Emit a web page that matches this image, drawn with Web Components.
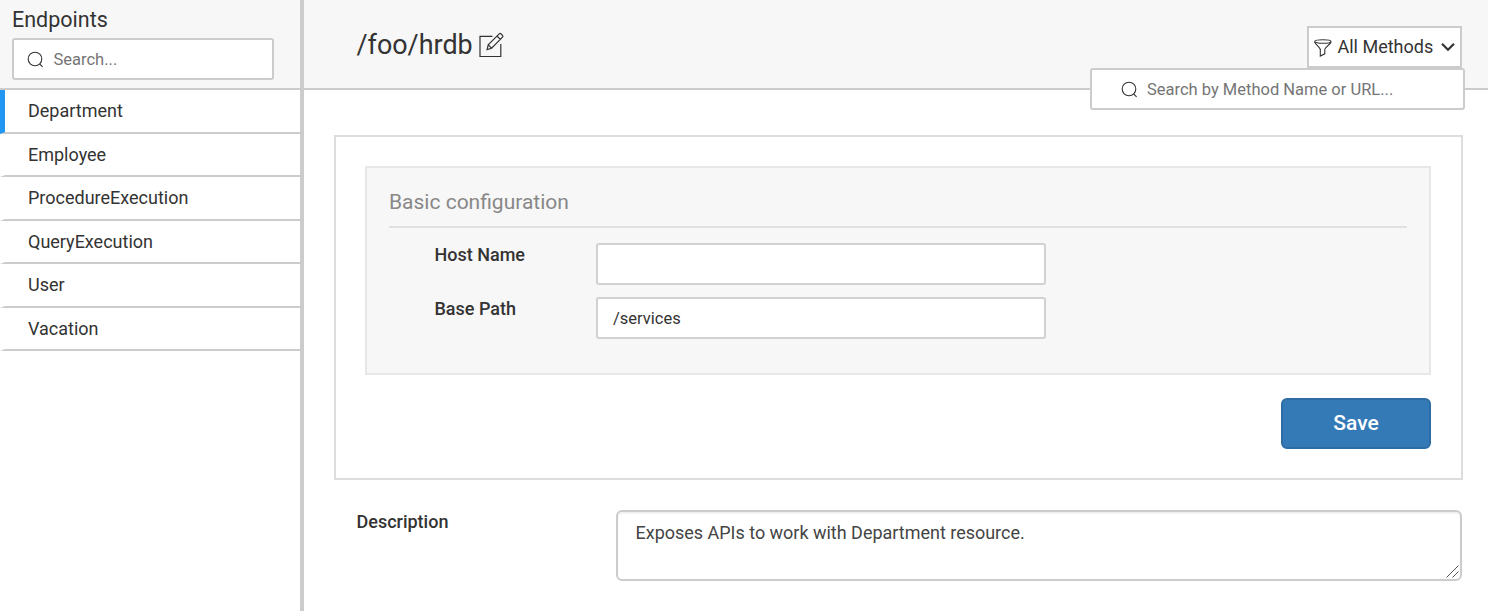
<!DOCTYPE html>
<html lang="en"><head><meta charset="utf-8"><title>Endpoints</title>
<style>
html,body{margin:0;height:100%;overflow:hidden}
body{font-family:Roboto,sans-serif;color:#333;background:#fff}
</style></head><body>
<api-page></api-page>
<script>
const define=(name,html)=>customElements.define(name,class extends HTMLElement{
  constructor(){super();const t=document.createElement('template');
    t.innerHTML='<style>*{box-sizing:border-box}:host{box-sizing:border-box}</style>'+html;
    this.attachShadow({mode:'open'}).append(t.content.cloneNode(true));}
});

define('search-box',`<style>
:host{display:flex;align-items:center;height:42px;background:#fff;border:2px solid #ccc;border-radius:3px;color:#757575;font-size:16.5px;line-height:20px;padding-left:var(--inset,13px);white-space:nowrap}
svg{flex:none;width:18px;height:18px;margin-right:8.5px;margin-top:2px}
span{padding-top:2px}
</style><svg viewBox="0 0 18 18" fill="none" stroke="#333" stroke-width="1.1"><circle cx="8" cy="8" r="6.8"/><path d="M12.6 12.8 15.6 15.8"/></svg><span><slot></slot></span>`);

define('endpoint-item',`<style>
:host{display:block;height:43.5px;border-left:5px solid transparent;border-bottom:2px solid #ccc;padding:10px 0 0 23px;font-size:18px;line-height:22px}
:host([active]){border-left-color:#2196f3}
</style><slot></slot>`);

define('endpoint-sidebar',`<style>
:host{display:flex;flex-direction:column;flex:none;width:304px;border-right:4px solid #ccc}
header{height:90px;background:#f7f7f7;border-bottom:2px solid #ccc;padding:7px 26px 0 12px}
h1{margin:0 0 5px;font-weight:400;font-size:21.5px;line-height:26px}
</style><header><h1>Endpoints</h1><search-box>Search...</search-box></header>
<nav><endpoint-item active>Department</endpoint-item><endpoint-item>Employee</endpoint-item><endpoint-item>ProcedureExecution</endpoint-item><endpoint-item>QueryExecution</endpoint-item><endpoint-item>User</endpoint-item><endpoint-item>Vacation</endpoint-item></nav>`);

define('method-filter',`<style>
:host{display:flex;align-items:center;width:155px;height:42px;border:2px solid #ccc;background:#fff;font-size:18px;line-height:22px;padding-left:4px;white-space:nowrap}
.f{width:19px;height:20px;margin-right:5.5px;margin-top:2px;flex:none}
.c{width:14px;height:10px;margin-left:7.5px;flex:none}
</style><svg class="f" viewBox="0 0 19 20" fill="none" stroke="#333" stroke-width="1.1"><ellipse cx="9.8" cy="3.5" rx="8.2" ry="1.8"/><path d="M1.6 4C2 6 7.3 10 7.3 11.5V18.1L11.8 15.8V11.5C11.8 10 17.5 6 18 4"/></svg><slot></slot><svg class="c" viewBox="0 0 14 10" fill="none" stroke="#333" stroke-width="2.2"><path d="M1 1.8 7 7.8 13 1.8"/></svg>`);

define('service-header',`<style>
:host{display:flex;justify-content:space-between;height:90px;background:#f7f7f7;border-bottom:2px solid #ccc;padding:26px 23px 0 52.5px}
h2{display:flex;margin:4px 0 0;height:30px;font-weight:400;font-size:26.9px;line-height:30px}
h2 svg{width:25px;height:26px;margin:2px 0 0 6.6px}
.tools{display:flex;flex-direction:column;align-items:flex-end;width:375px}
method-filter{flex:none;margin-right:3px}
search-box{--inset:28.5px;flex:none;width:375px;position:relative}
</style><h2>/foo/hrdb<svg viewBox="0 0 25 26" fill="none" stroke="#333" stroke-width="1.2"><path d="M13.5 4.3H1V24.5H21.8V12"/><path d="M8.1 17.6 9.2 12.8 20.2 1.8Q21 1 21.9 1.8L23.5 3.4Q24.3 4.3 23.5 5.1L12.6 16.2ZM9.2 12.8 12.6 16.2M18 4 21.3 7.3"/></svg></h2>
<div class="tools"><method-filter>All Methods</method-filter><search-box>Search by Method Name or URL...</search-box></div>`);

define('form-row',`<style>
:host{display:flex;height:42px;margin-bottom:12px;padding-left:45.5px}
label{width:161.5px;font-weight:500;font-size:18px;line-height:22px;padding-top:1px}
div{width:450px;height:42px;border:2px solid #d1d1d1;border-radius:3px;background:#fff;font-size:16.5px;line-height:37px;padding:1px 0 0 15px}
</style><label><slot name="label"></slot></label><div><slot></slot></div>`);

define('config-card',`<style>
:host{display:flex;flex-direction:column;align-items:flex-end;height:345px;margin:45px 25px 0 30px;padding:29px 30px 0 29px;border:2px solid #ddd}
section{align-self:stretch;height:209px;background:#f7f7f7;border:2px solid #e7e7e7;padding:21px 22px 0}
h3{margin:0 0 15px;height:39px;border-bottom:2px solid #e1e1e1;font-weight:400;font-size:21px;line-height:26px;color:#888}
button{width:150px;height:51px;margin-top:23px;background:#337ab7;border:2px solid #2e6da4;border-radius:6px;color:#fff;font:500 21px/26px Roboto,sans-serif;padding:0 0 2px}
</style><section><h3>Basic configuration</h3><form-row><span slot="label">Host Name</span></form-row><form-row><span slot="label">Base Path</span>/services</form-row></section><button>Save</button>`);

define('description-field',`<style>
:host{display:flex;margin:30px 26px 0 52.5px}
label{flex:none;width:259.5px;font-weight:500;font-size:18px;line-height:22px;padding-top:1px}
div{position:relative;flex:1;height:71px;border:2px solid #ccc;border-radius:6px;box-shadow:inset 0 1.5px 1.5px rgba(0,0,0,.075);font-size:17.98px;line-height:24px;padding:9px 17.5px;color:#444}
svg{position:absolute;right:1px;bottom:1px;width:13px;height:13px}
</style><label>Description</label><div><slot></slot><svg viewBox="0 0 13 13" stroke="#555" fill="none"><path d="M.5 12.5 12.5.5M6.5 12.5 12.5 6.5"/></svg></div>`);

define('api-page',`<style>
:host{display:flex;height:611px;overflow:hidden}
main{flex:1;min-width:0}
</style><endpoint-sidebar></endpoint-sidebar><main><service-header></service-header><config-card></config-card><description-field>Exposes APIs to work with Department resource.</description-field></main>`);
</script></body></html>
